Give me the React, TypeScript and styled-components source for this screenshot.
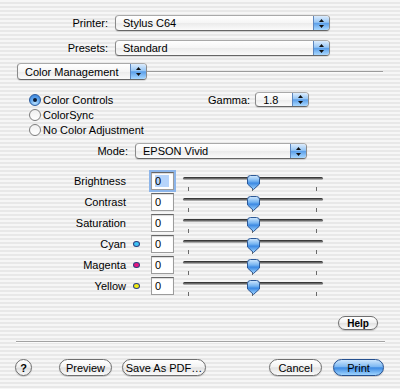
import React from 'react';
import styled, { createGlobalStyle, css } from 'styled-components';

const GlobalStyle = createGlobalStyle`
  html, body { margin: 0; padding: 0; }
  body { font-family: "Liberation Sans", Arial, sans-serif; font-size: 11px; color: #000; }
`;

const Window = styled.div`
  width: 400px;
  height: 389px;
  box-sizing: border-box;
  background: repeating-linear-gradient(to bottom, #f6f6f6 0 2px, #e8e8e8 2px 4px);
  display: flex;
  flex-direction: column;
  overflow: hidden;
`;

const Header = styled.div`
  display: flex;
  flex-direction: column;
  gap: 9px;
  padding-top: 15px;
`;

const FieldRow = styled.div`
  display: flex;
  align-items: center;
`;

const FieldLabel = styled.div<{ $w: number }>`
  width: ${(p) => p.$w}px;
  box-sizing: border-box;
  padding-right: 7px;
  text-align: right;
  white-space: nowrap;
`;

const Popup = styled.div<{ $w: number; $h?: number }>`
  width: ${(p) => p.$w}px;
  height: ${(p) => p.$h ?? 16}px;
  box-sizing: border-box;
  display: flex;
  align-items: stretch;
  border: 1px solid #8a8a8a;
  border-top-color: #a9a9a9;
  border-bottom-color: #666;
  border-radius: 4px;
  background: linear-gradient(#ffffff, #f5f5f5 50%, #ebebeb 52%, #fbfbfb);
  box-shadow: 0 1px 1px rgba(0, 0, 0, 0.12);
  overflow: hidden;
  flex-shrink: 0;
`;

const PopupText = styled.span`
  flex: 1;
  display: flex;
  align-items: center;
  padding-left: 7px;
  white-space: nowrap;
`;

const PopupArrows = styled.span`
  width: 15px;
  border-left: 1px solid #5d86bd;
  background: linear-gradient(#dcecfd, #97c6f4 45%, #5b9fe9 52%, #a9d8ff);
  display: flex;
  align-items: center;
  justify-content: center;
`;

const Arrows = () => (
  <svg width="5" height="9" viewBox="0 0 5 9">
    <path d="M2.5 0 L5 3 H0 Z" fill="#111" />
    <path d="M0 6 H5 L2.5 9 Z" fill="#111" />
  </svg>
);

const PopupButton = ({ w, h, children }: { w: number; h?: number; children: React.ReactNode }) => (
  <Popup $w={w} $h={h}>
    <PopupText>{children}</PopupText>
    <PopupArrows>
      <Arrows />
    </PopupArrows>
  </Popup>
);

const PanelRow = styled.div`
  display: flex;
  align-items: center;
  margin-top: 7px;
  padding: 0 17px;
`;

const Rule = styled.div`
  flex: 1;
  height: 1px;
  background: #9b9b9b;
  border-bottom: 1px solid #fbfbfb;
`;

const Options = styled.div`
  display: flex;
  margin-top: 12px;
  padding-left: 29px;
`;

const RadioList = styled.div`
  display: flex;
  flex-direction: column;
  width: 179px;
`;

const RadioRow = styled.div`
  display: flex;
  align-items: center;
  gap: 2px;
  height: 15px;
  white-space: nowrap;
`;

const RadioDot = styled.span<{ $on?: boolean }>`
  width: 12px;
  height: 12px;
  box-sizing: border-box;
  border-radius: 50%;
  display: flex;
  align-items: center;
  justify-content: center;
  ${(p) =>
    p.$on
      ? css`
          border: 1px solid #2b5c9e;
          background: radial-gradient(circle at 50% 80%, #b6e0ff, #5aa0ea 55%, #2f7ad6);
        `
      : css`
          border: 1px solid #7d7d7d;
          background: linear-gradient(#f0f0f0, #ffffff);
        `}
  &::after {
    content: '';
    display: ${(p) => (p.$on ? 'block' : 'none')};
    width: 4px;
    height: 4px;
    border-radius: 50%;
    background: #0b1a33;
  }
`;

const GammaRow = styled.div`
  display: flex;
  align-items: center;
  height: 15px;
  gap: 5px;
`;

const ModeRow = styled.div`
  display: flex;
  align-items: center;
  margin-top: 6px;
`;

const Sliders = styled.div`
  display: flex;
  flex-direction: column;
  margin-top: 11px;
`;

const SliderRow = styled.div`
  display: flex;
  align-items: center;
  height: 21px;
`;

const SliderLabel = styled.div`
  width: 126px;
  text-align: right;
`;

const DotCell = styled.div`
  width: 25px;
  display: flex;
  align-items: center;
  padding-left: 7px;
  box-sizing: border-box;
`;

const ColorDot = styled.span<{ $c: string }>`
  width: 7px;
  height: 6px;
  box-sizing: border-box;
  border-radius: 50%;
  border: 1px solid #2c3f80;
  background: ${(p) => p.$c};
`;

const TextField = styled.div<{ $focus?: boolean }>`
  width: 23px;
  height: 18px;
  box-sizing: border-box;
  background: #fff;
  border: 1px solid #9c9c9c;
  border-top-color: #666;
  box-shadow: inset 0 1px 1px rgba(0, 0, 0, 0.15);
  display: flex;
  align-items: center;
  padding-left: 3px;
  ${(p) =>
    p.$focus &&
    css`
      box-shadow: 0 0 0 2px #8cb5ea, inset 0 1px 1px rgba(0, 0, 0, 0.15);
    `}
`;

const Selection = styled.span<{ $on?: boolean }>`
  padding-right: 8px;
  background: ${(p) => (p.$on ? '#b6d4fb' : 'transparent')};
`;

const SliderBox = styled.div`
  position: relative;
  width: 140px;
  height: 21px;
  margin-left: 9px;
  display: flex;
  flex-direction: column;
`;

const Track = styled.div`
  margin-top: 7px;
  height: 5px;
  border-radius: 3px;
  background: linear-gradient(#262626, #4e4e4e 35%, #8f8f8f 70%, #c8c8c8);
`;

const Ticks = styled.div`
  margin-top: 7px;
  display: flex;
  justify-content: space-between;
  padding: 0 6px 0 5px;
`;

const Tick = styled.span`
  width: 1px;
  height: 4px;
  background: #6a6a6a;
`;

const Thumb = styled.svg`
  position: absolute;
  left: 64px;
  top: 5px;
`;

const HelpRow = styled.div`
  display: flex;
  justify-content: flex-end;
  padding-right: 22px;
  margin-top: 20px;
`;

const Button = styled.div<{ $w: number; $primary?: boolean; $small?: boolean }>`
  width: ${(p) => p.$w}px;
  height: ${(p) => (p.$small ? 14 : 17)}px;
  box-sizing: border-box;
  border-radius: 9px;
  display: flex;
  align-items: center;
  justify-content: center;
  white-space: nowrap;
  font-size: ${(p) => (p.$small ? 10 : 11)}px;
  font-weight: ${(p) => (p.$small ? 'bold' : 'normal')};
  border: 1px solid #6f6f6f;
  box-shadow: 0 1px 1px rgba(0, 0, 0, 0.18);
  background: linear-gradient(#ffffff, #f3f3f3 45%, #e2e2e2 52%, #fbfbfb);
  ${(p) =>
    p.$primary &&
    css`
      border-color: #25508f;
      background: linear-gradient(#cde6fd, #7db8f2 45%, #3d8ae3 52%, #9fd5ff);
    `}
`;

const Separator = styled.div`
  margin: 11px 15px 0 16px;
  height: 1px;
  background: #a3a3a3;
  border-bottom: 1px solid #fbfbfb;
`;

const BottomRow = styled.div`
  display: flex;
  align-items: center;
  margin-top: 16px;
  padding: 0 16px 0 15px;
`;

const Group = styled.div<{ $gap: number }>`
  display: flex;
  align-items: center;
  gap: ${(p) => p.$gap}px;
`;

const Spacer = styled.div`
  flex: 1;
`;

const HelpCircle = styled.div`
  width: 17px;
  height: 17px;
  box-sizing: border-box;
  border-radius: 50%;
  border: 1px solid #6f6f6f;
  background: linear-gradient(#ffffff, #f0f0f0 45%, #dedede 55%, #fafafa);
  box-shadow: 0 1px 1px rgba(0, 0, 0, 0.18);
  display: flex;
  align-items: center;
  justify-content: center;
  font-weight: bold;
  font-size: 11px;
  margin-right: 17px;
`;

const ThumbIcon = () => (
  <Thumb width="13" height="16" viewBox="0 0 13 16">
    <defs>
      <linearGradient id="thumbGrad" x1="0" y1="0" x2="0" y2="1">
        <stop offset="0" stopColor="#d3e9fd" />
        <stop offset="0.4" stopColor="#74b3f1" />
        <stop offset="0.55" stopColor="#3d8ae3" />
        <stop offset="1" stopColor="#a2d6ff" />
      </linearGradient>
    </defs>
    <path
      d="M0.5 3.5 Q0.5 0.5 3.5 0.5 H9.5 Q12.5 0.5 12.5 3.5 V9 L6.5 14.5 L0.5 9 Z"
      fill="url(#thumbGrad)"
      stroke="#2c5896"
    />
  </Thumb>
);

const rows: { label: string; dot?: string }[] = [
  { label: 'Brightness' },
  { label: 'Contrast' },
  { label: 'Saturation' },
  { label: 'Cyan', dot: '#3fc4f6' },
  { label: 'Magenta', dot: '#e8157f' },
  { label: 'Yellow', dot: '#f3ee12' },
];

export default function App() {
  return (
    <Window>
      <GlobalStyle />
      <Header>
        <FieldRow>
          <FieldLabel $w={115}>Printer:</FieldLabel>
          <PopupButton w={215}>Stylus C64</PopupButton>
        </FieldRow>
        <FieldRow>
          <FieldLabel $w={115}>Presets:</FieldLabel>
          <PopupButton w={215}>Standard</PopupButton>
        </FieldRow>
      </Header>
      <PanelRow>
        <PopupButton w={130} h={17}>Color Management</PopupButton>
        <Rule />
      </PanelRow>
      <Options>
        <RadioList>
          <RadioRow>
            <RadioDot $on />
            Color Controls
          </RadioRow>
          <RadioRow>
            <RadioDot />
            ColorSync
          </RadioRow>
          <RadioRow>
            <RadioDot />
            No Color Adjustment
          </RadioRow>
        </RadioList>
        <GammaRow>
          Gamma:
          <PopupButton w={54} h={15}>1.8</PopupButton>
        </GammaRow>
      </Options>
      <ModeRow>
        <FieldLabel $w={135}>Mode:</FieldLabel>
        <PopupButton w={172}>EPSON Vivid</PopupButton>
      </ModeRow>
      <Sliders>
        {rows.map((r, i) => (
          <SliderRow key={r.label}>
            <SliderLabel>{r.label}</SliderLabel>
            <DotCell>{r.dot && <ColorDot $c={r.dot} />}</DotCell>
            <TextField $focus={i === 0}>
              <Selection $on={i === 0}>0</Selection>
            </TextField>
            <SliderBox>
              <Track />
              <Ticks>
                <Tick />
                <Tick />
                <Tick />
              </Ticks>
              <ThumbIcon />
            </SliderBox>
          </SliderRow>
        ))}
      </Sliders>
      <HelpRow>
        <Button $w={40} $small>Help</Button>
      </HelpRow>
      <Separator />
      <BottomRow>
        <Group $gap={10}>
          <HelpCircle>?</HelpCircle>
          <Button $w={53}>Preview</Button>
          <Button $w={84}>Save As PDF…</Button>
        </Group>
        <Spacer />
        <Group $gap={11}>
          <Button $w={53}>Cancel</Button>
          <Button $w={51} $primary>Print</Button>
        </Group>
      </BottomRow>
    </Window>
  );
}
